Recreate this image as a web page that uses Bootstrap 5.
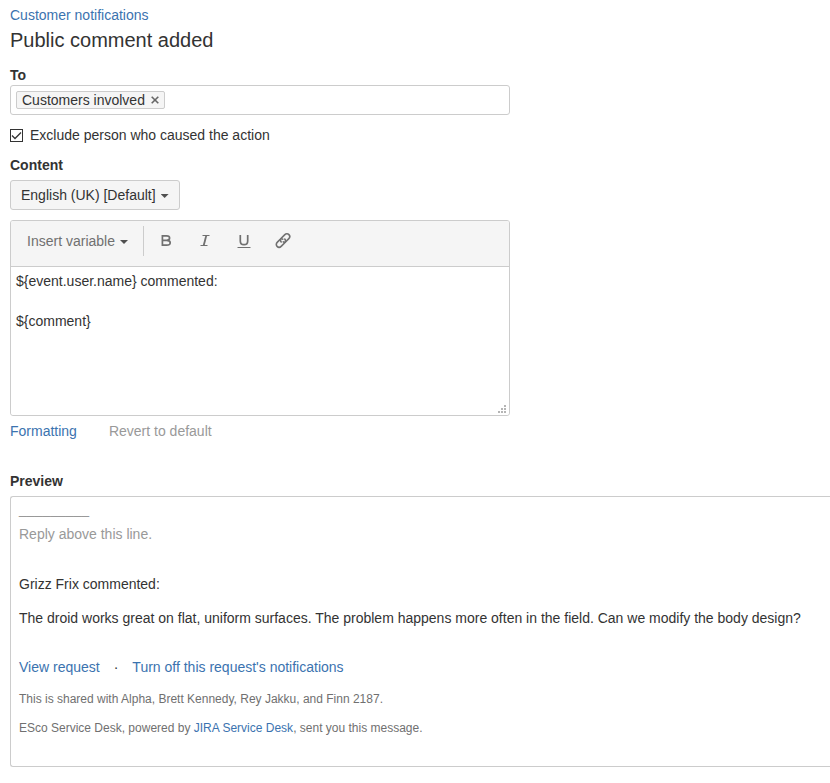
<!DOCTYPE html>
<html lang="en">
<head>
<meta charset="utf-8">
<meta name="viewport" content="width=device-width, initial-scale=1">
<title>Public comment added</title>
<link href="https://cdn.jsdelivr.net/npm/bootstrap@5.3.0/dist/css/bootstrap.min.css" rel="stylesheet">
<style>
  :root { --line: #ccc; --link: #3b73af; --ink: #333; --soft: #707070; --faint: #999; --panel: #f5f5f5; }
  body { font-family: "Liberation Sans", Arial, sans-serif; font-size: 14px; line-height: 20px; color: var(--ink); background: #fff; }
  a { color: var(--link); text-decoration: none; }
  a:hover { text-decoration: underline; }
  .page { padding: 5px 0 16px 10px; }
  .page-title { font-size: 20px; line-height: 30px; font-weight: 400; margin: 0 0 10px; }
  .field-title { font-size: 14px; line-height: 20px; font-weight: 700; margin: 0; }
  .field-width { max-width: 500px; }
  .tag-field { min-height: 30px; padding: 5px; border: 1px solid var(--line); border-radius: 3px; }
  .tag { height: 18px; line-height: 16px; padding: 0 5px; border: 1px solid var(--line); border-radius: 2px; background: var(--panel); }
  .tag-close { width: 8px; height: 8px; margin-left: 6px; }
  .tag-close svg { display: block; }
  .check-row { margin: 10px 0; gap: 7px; }
  .check-row .form-check-input { width: 13px; height: 13px; margin: 0; border: 1px solid var(--ink); border-radius: 0; background-color: #fff; }
  .check-row .form-check-input:checked { background-size: 11px 11px; background-image: url("data:image/svg+xml,%3csvg xmlns='http://www.w3.org/2000/svg' viewBox='0 0 11 11'%3e%3cpath fill='none' stroke='%23333' stroke-width='1.3' d='M1 5.5 4 8.5 10 2.5'/%3e%3c/svg%3e"); }
  .lang-btn { height: 30px; padding: 0 10px; margin: 5px 0 10px; font-size: 14px; line-height: 20px; color: var(--ink); background: var(--panel); border: 1px solid var(--line); border-radius: 3px; }
  .caret-menu::after { width: 8px; height: 4px; margin-left: 5px; border: 0; vertical-align: 2px; background: #505050; clip-path: polygon(0 0, 100% 0, 50% 100%); }
  .editor { border: 1px solid var(--line); border-radius: 3px; }
  .tools { height: 46px; padding: 5px 0 10px 5px; background: var(--panel); border-bottom: 1px solid var(--line); border-radius: 2px 2px 0 0; }
  .tools .btn { font-size: 14px; line-height: 20px; color: var(--soft); border: 0; border-radius: 3px; padding: 0; }
  .tools .variable-btn { width: 128px; height: 30px; border-right: 1px solid var(--line); border-radius: 0; padding-right: 4px; }
  .tool-set { margin-left: 2px; }
  .tool-btn { width: 39px; height: 30px; }
  .tool-btn svg { display: block; margin: 0 auto; }
  .editor textarea { height: 148px; padding: 4px 5px; border: 0; border-radius: 3px; resize: none; font-size: 14px; line-height: 20px; color: var(--ink); }
  .grip { right: 3px; bottom: 2px; }
  .under-links { gap: 32px; margin: 5px 0 30px; }
  .quiet-link { color: var(--faint); }
  .preview { padding: 2px 0 28px 8px; margin-top: 5px; border: 1px solid var(--line); border-right: 0; border-radius: 3px 0 0 3px; }
  .preview p { margin: 0; }
  .preview .faint { color: var(--faint); }
  .preview .rule-line { margin-bottom: 5px; }
  .preview .author { margin-top: 30px; }
  .preview .message { margin-top: 14px; }
  .preview .actions { gap: 14px; margin-top: 29px; margin-bottom: 12px; }
  .preview .note { font-size: 12px; color: var(--soft); }
  .preview .note + .note { margin-top: 9px; }
</style>
</head>
<body>
<main class="page">
  <a href="#">Customer notifications</a>
  <h1 class="page-title">Public comment added</h1>

  <div class="field-width">
    <h2 class="field-title">To</h2>
    <div class="tag-field d-flex align-items-center">
      <span class="tag d-inline-flex align-items-center">Customers involved
        <button type="button" class="tag-close border-0 bg-transparent p-0" aria-label="Remove Customers involved">
          <svg width="8" height="8" viewBox="0 0 8 8"><path d="M.7 .7 7.3 7.3M7.3 .7 .7 7.3" stroke="#666" stroke-width="1.6" fill="none"/></svg>
        </button>
      </span>
    </div>
    <div class="check-row d-flex align-items-center">
      <input class="form-check-input" type="checkbox" id="exclude" checked>
      <label for="exclude">Exclude person who caused the action</label>
    </div>

    <h2 class="field-title"><label for="content">Content</label></h2>
    <button type="button" class="lang-btn btn caret-menu dropdown-toggle">English (UK) [Default]</button>

    <div class="editor position-relative">
      <div class="tools d-flex" role="toolbar" aria-label="Formatting tools">
        <button type="button" class="btn variable-btn caret-menu dropdown-toggle">Insert variable</button>
        <div class="tool-set d-flex">
          <button type="button" class="btn tool-btn" aria-label="Bold">
            <svg width="16" height="16" viewBox="0 0 16 16" fill="none" stroke="#707070" stroke-width="1.7"><path d="M4.4 2.8H8.6Q11.6 2.8 11.6 5.1T8.6 7.4H4.4M8.6 7.4Q12.2 7.4 12.2 9.8T8.6 12.2H4.4M4.4 2V13"/></svg>
          </button>
          <button type="button" class="btn tool-btn" aria-label="Italic">
            <svg width="16" height="16" viewBox="0 0 16 16" fill="none" stroke="#707070"><path d="M5.5 2.5H12.5M3.5 12.5H10.5" stroke-width="1.2"/><path d="M9.3 2.5 6.7 12.5" stroke-width="1.8"/></svg>
          </button>
          <button type="button" class="btn tool-btn" aria-label="Underline">
            <svg width="16" height="16" viewBox="0 0 16 16" fill="none" stroke="#707070"><path d="M4.3 2V8Q4.3 11.7 8 11.7T11.7 8V2" stroke-width="1.7"/><path d="M1.5 14.5H14.5"/></svg>
          </button>
          <button type="button" class="btn tool-btn" aria-label="Link">
            <svg width="16" height="16" viewBox="0 1 16 16" fill="none" stroke="#707070" stroke-width="1.6" stroke-linecap="round"><path d="M6.2 9.9C5 8.5 5.2 7.3 6.2 6.3L9.6 2.9C11 1.5 12.8 1.5 13.9 2.6S15 5.5 13.6 6.9L11 9.5C10.2 10.3 9.2 10.5 8.3 9.8"/><path d="M9.8 7.1C11 8.5 10.8 9.7 9.8 10.7L6.4 14.1C5 15.5 3.2 15.5 2.1 14.4S1 11.5 2.4 10.1L5 7.5C5.8 6.7 6.8 6.5 7.7 7.2"/></svg>
          </button>
        </div>
      </div>
      <textarea id="content" class="form-control d-block">${event.user.name} commented:

${comment}</textarea>
      <svg class="grip position-absolute pe-none" width="8" height="8" viewBox="0 0 8 8" fill="#b5b5b5" aria-hidden="true"><path d="M6 0h2v2H6zM3 3h2v2H3zM6 3h2v2H6zM0 6h2v2H0zM3 6h2v2H3zM6 6h2v2H6z"/></svg>
    </div>
    <div class="under-links d-flex">
      <a href="#">Formatting</a>
      <a href="#" class="quiet-link">Revert to default</a>
    </div>
  </div>

  <h2 class="field-title">Preview</h2>
  <section class="preview" aria-label="Preview">
    <p class="faint rule-line">_________</p>
    <p class="faint">Reply above this line.</p>
    <p class="author">Grizz Frix commented:</p>
    <p class="message">The droid works great on flat, uniform surfaces. The problem happens more often in the field. Can we modify the body design?</p>
    <div class="actions d-flex">
      <a href="#">View request</a><span>·</span><a href="#">Turn off this request's notifications</a>
    </div>
    <p class="note">This is shared with Alpha, Brett Kennedy, Rey Jakku, and Finn 2187.</p>
    <p class="note">ESco Service Desk, powered by <a href="#">JIRA Service Desk</a>, sent you this message.</p>
  </section>
</main>
<script src="https://cdn.jsdelivr.net/npm/bootstrap@5.3.0/dist/js/bootstrap.bundle.min.js"></script>
</body>
</html>
